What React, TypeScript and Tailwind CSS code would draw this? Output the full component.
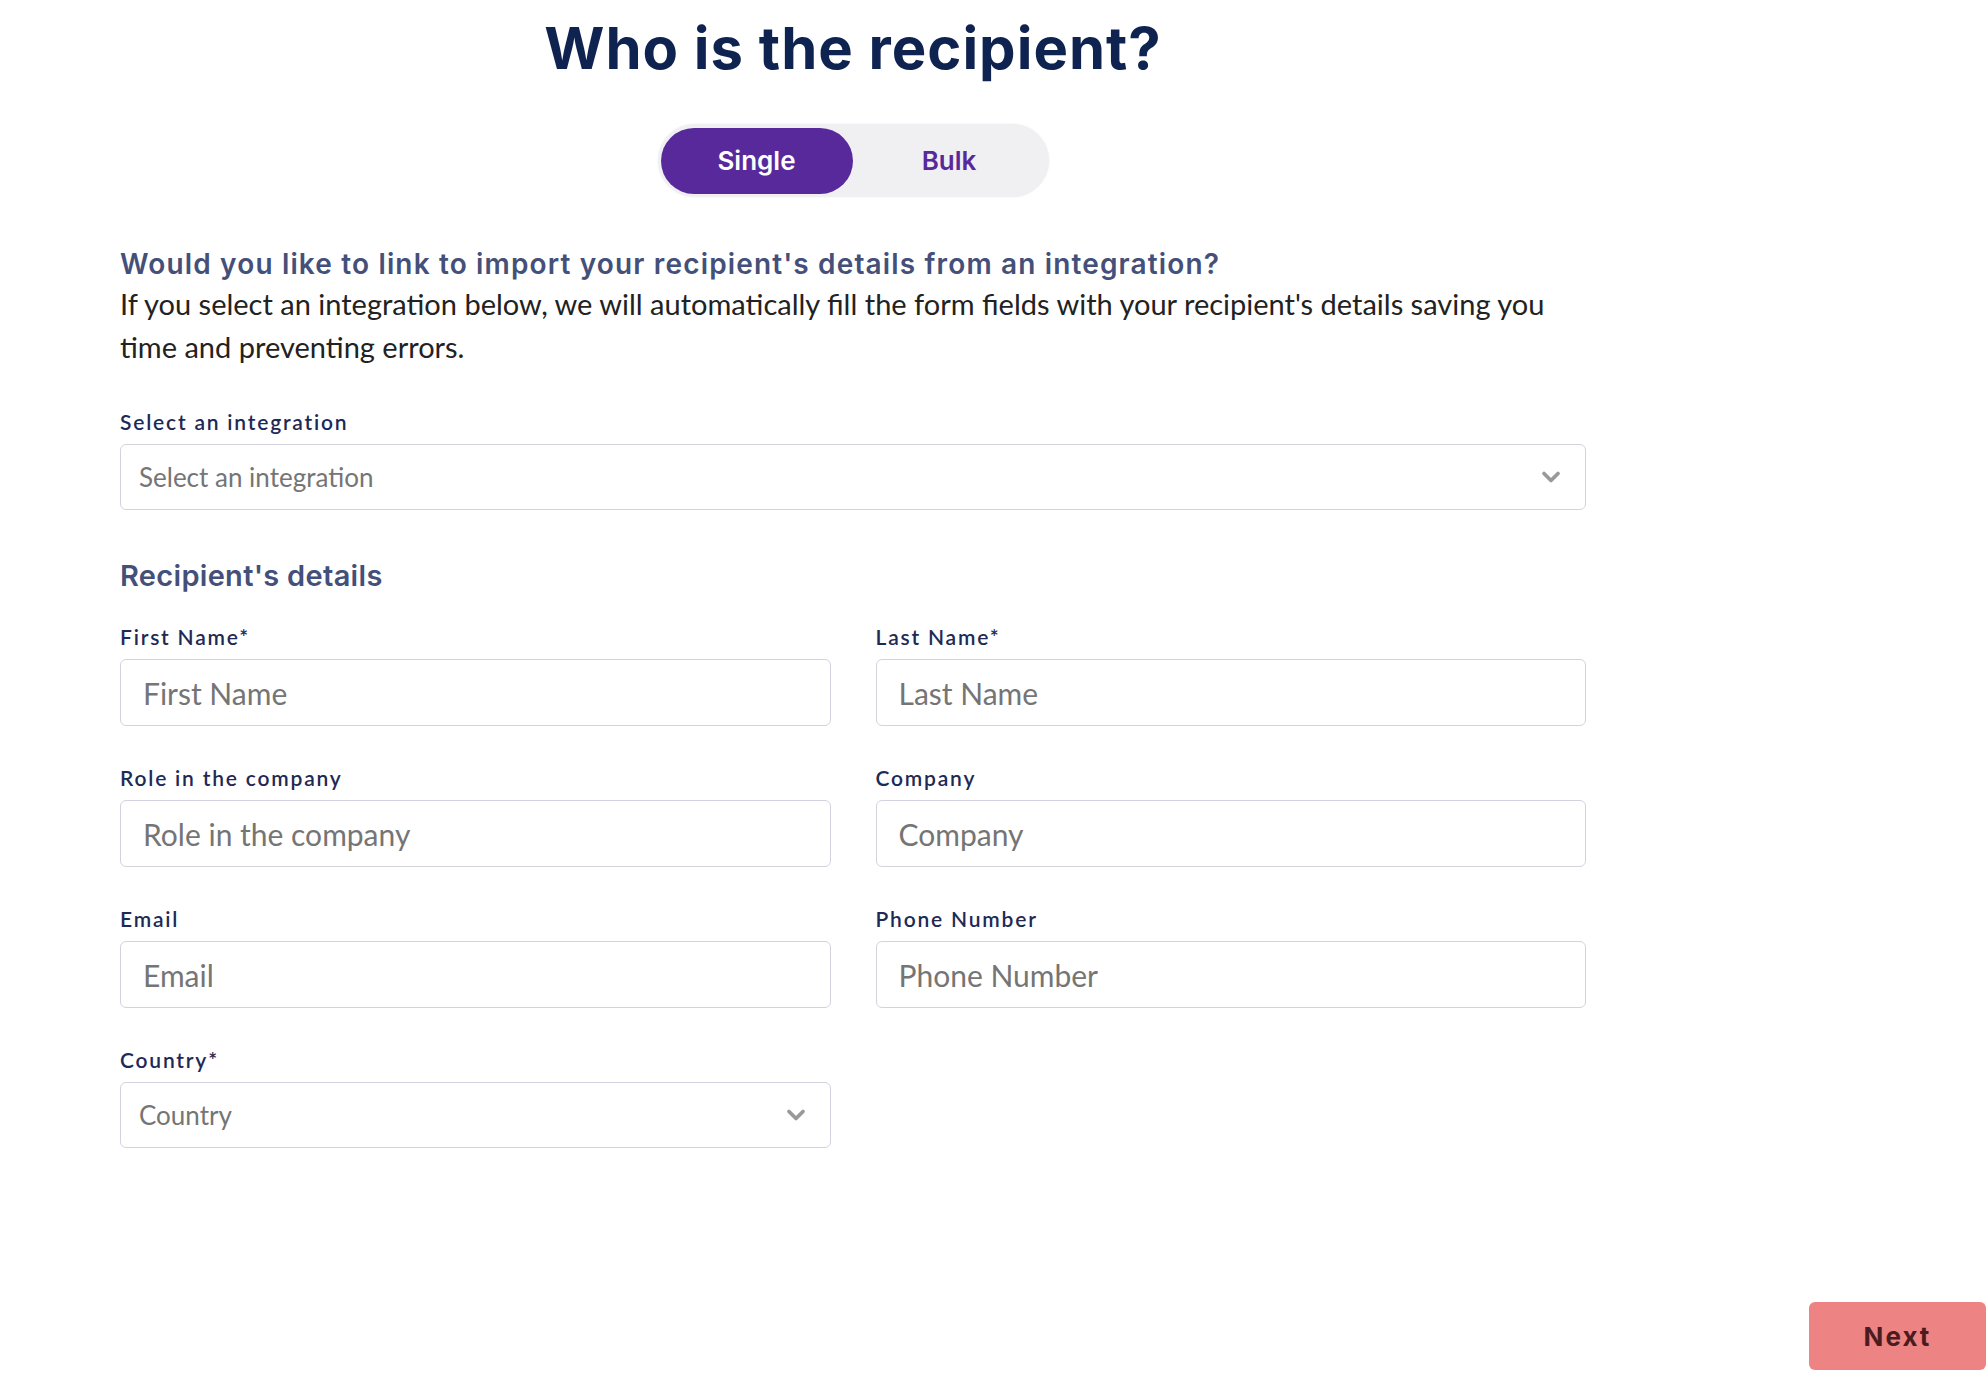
import { ChevronDown } from "lucide-react";

const heading = { fontFamily: "Inter, 'Noto Sans', sans-serif" };
const body = { fontFamily: "Lato, 'Open Sans', sans-serif" };

type FieldProps = {
  label: string;
  placeholder: string;
};

function Field({ label, placeholder }: FieldProps) {
  return (
    <div className="flex flex-col">
      <label className="mb-[9px] text-[21px] font-semibold leading-[26px] tracking-[1.8px] text-[#1e2a55]">
        {label}
      </label>
      <input
        placeholder={placeholder}
        className="h-[67px] rounded-[6px] border border-[#d3d3e0] bg-white px-[22px] text-[30px] text-[#333] outline-none placeholder:text-[#757575]"
        style={body}
      />
    </div>
  );
}

function SelectField({ label, placeholder }: FieldProps) {
  return (
    <div className="flex flex-col">
      <label className="mb-[9px] text-[21px] font-semibold leading-[26px] tracking-[1.8px] text-[#1e2a55]">
        {label}
      </label>
      <div className="flex h-[66px] items-center justify-between rounded-[6px] border border-[#d3d3e0] bg-white pl-[18px] pr-[20px]">
        <span className="text-[26px] text-[#757575]">{placeholder}</span>
        <ChevronDown className="h-[28px] w-[28px] text-[#999]" strokeWidth={3.2} />
      </div>
    </div>
  );
}

export default function App() {
  return (
    <div className="flex h-[1378px] w-full flex-col bg-white" style={body}>
      <main className="w-[1466px] ml-[120px] flex flex-col">
        <h1
          className="mt-[12px] text-center text-[58px] font-bold leading-[72px] tracking-[1px] text-[#0f2350]"
          style={heading}
        >
          Who is the recipient?
        </h1>

        <div className="mt-[40px] flex justify-center">
          <div className="flex h-[73px] w-[391px] items-center rounded-full bg-[#f0f0f3] p-[3px] shadow-[0_0_2px_rgba(0,0,0,0.08)]">
            <button
              className="h-[66px] w-[192px] rounded-full bg-[#58299a] text-[26px] font-semibold text-white"
              style={heading}
            >
              Single
            </button>
            <button
              className="h-[66px] flex-1 rounded-full text-[26px] font-semibold text-[#58299a]"
              style={heading}
            >
              Bulk
            </button>
          </div>
        </div>

        <h2
          className="mt-[49px] text-[28px] font-semibold leading-[36px] tracking-[1.15px] text-[#44507a]"
          style={heading}
        >
          Would you like to link to import your recipient's details from an integration?
        </h2>
        <p className="w-[1466px] text-[29px] leading-[43px] text-[#222]">
          If you select an integration below, we will automatically fill the form fields with your
          recipient's details saving you time and preventing errors.
        </p>

        <div className="mt-[41px]">
          <SelectField label="Select an integration" placeholder="Select an integration" />
        </div>

        <h2
          className="mt-[46px] text-[29px] font-semibold leading-[40px] tracking-[0.3px] text-[#44507a]"
          style={heading}
        >
          Recipient's details
        </h2>

        <div className="mt-[28px] grid grid-cols-2 gap-x-[45px] gap-y-[39px]">
          <Field label="First Name*" placeholder="First Name" />
          <Field label="Last Name*" placeholder="Last Name" />
          <Field label="Role in the company" placeholder="Role in the company" />
          <Field label="Company" placeholder="Company" />
          <Field label="Email" placeholder="Email" />
          <Field label="Phone Number" placeholder="Phone Number" />
          <SelectField label="Country*" placeholder="Country" />
        </div>
      </main>

      <div className="flex-1" />

      <div className="flex justify-end pb-[8px] pr-[2px]">
        <button
          className="h-[68px] w-[177px] rounded-[6px] bg-[#ee8384] text-[26px] font-bold tracking-[2px] text-[#4a1c1f]"
          style={heading}
        >
          Next
        </button>
      </div>
    </div>
  );
}
